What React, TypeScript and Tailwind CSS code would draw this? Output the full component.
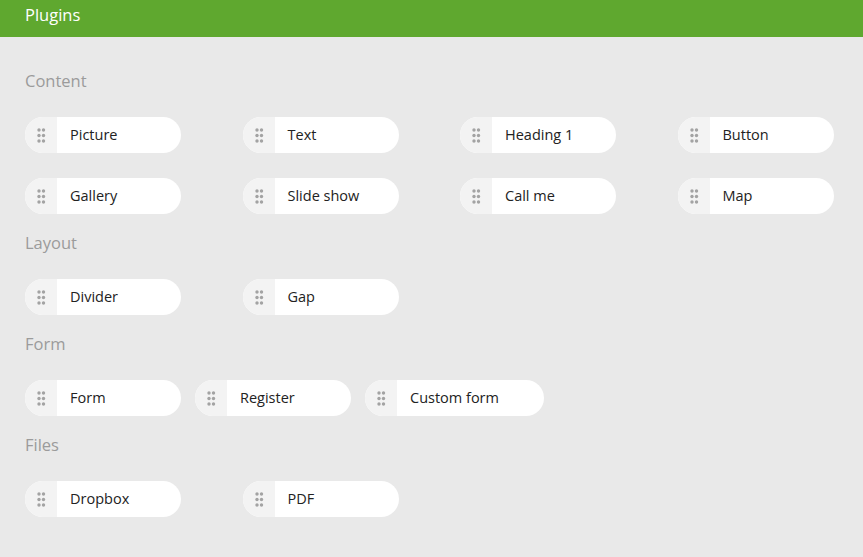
import React from 'react';

type Section = {
  title: string;
  items: string[];
  grid?: boolean;
};

const sections: Section[] = [
  { title: 'Content', items: ['Picture', 'Text', 'Heading 1', 'Button', 'Gallery', 'Slide show', 'Call me', 'Map'], grid: true },
  { title: 'Layout', items: ['Divider', 'Gap'], grid: true },
  { title: 'Form', items: ['Form', 'Register', 'Custom form'] },
  { title: 'Files', items: ['Dropbox', 'PDF'], grid: true },
];

const DragHandle = () => (
  <svg width="9" height="15" viewBox="0 0 9 15" className="fill-[#a3a3a3]">
    <circle cx="2" cy="2" r="1.7" />
    <circle cx="6.5" cy="2" r="1.7" />
    <circle cx="2" cy="7.5" r="1.7" />
    <circle cx="6.5" cy="7.5" r="1.7" />
    <circle cx="2" cy="13" r="1.7" />
    <circle cx="6.5" cy="13" r="1.7" />
  </svg>
);

const Plugin = ({ name, fixed }: { name: string; fixed?: boolean }) => (
  <div
    className={
      fixed
        ? 'flex h-9 w-[156px] items-stretch overflow-hidden rounded-full bg-white'
        : 'flex h-9 min-w-[156px] items-stretch overflow-hidden rounded-full bg-white'
    }
  >
    <div className="flex w-8 shrink-0 items-center justify-center bg-[#f3f3f3] pl-[1px]">
      <DragHandle />
    </div>
    <span className="flex items-center whitespace-nowrap pl-[13px] pr-[45px] text-[14.5px] text-[#222]">{name}</span>
  </div>
);

export default function App() {
  return (
    <div className="min-h-[557px] bg-[#e9e9e9] font-['Open_Sans',sans-serif]">
      <div className="flex h-[37px] items-start bg-[#5fa82f] px-[25px] pt-[4px]">
        <h1 className="text-[16.5px] leading-[22px] text-white">Plugins</h1>
      </div>

      <div className="px-[25px] pt-[34px]">
        {sections.map((s) => (
          <div key={s.title} className="mb-[19px]">
            <h2 className="mb-[26px] text-[16.5px] leading-5 text-[#9b9b9b]">{s.title}</h2>
            {s.grid ? (
              <div className="grid grid-cols-[repeat(4,217.5px)] gap-y-[25px]">
                {s.items.map((i) => (
                  <Plugin key={i} name={i} fixed />
                ))}
              </div>
            ) : (
              <div className="flex flex-wrap gap-[14px]">
                {s.items.map((i) => (
                  <Plugin key={i} name={i} />
                ))}
              </div>
            )}
          </div>
        ))}
      </div>
    </div>
  );
}
